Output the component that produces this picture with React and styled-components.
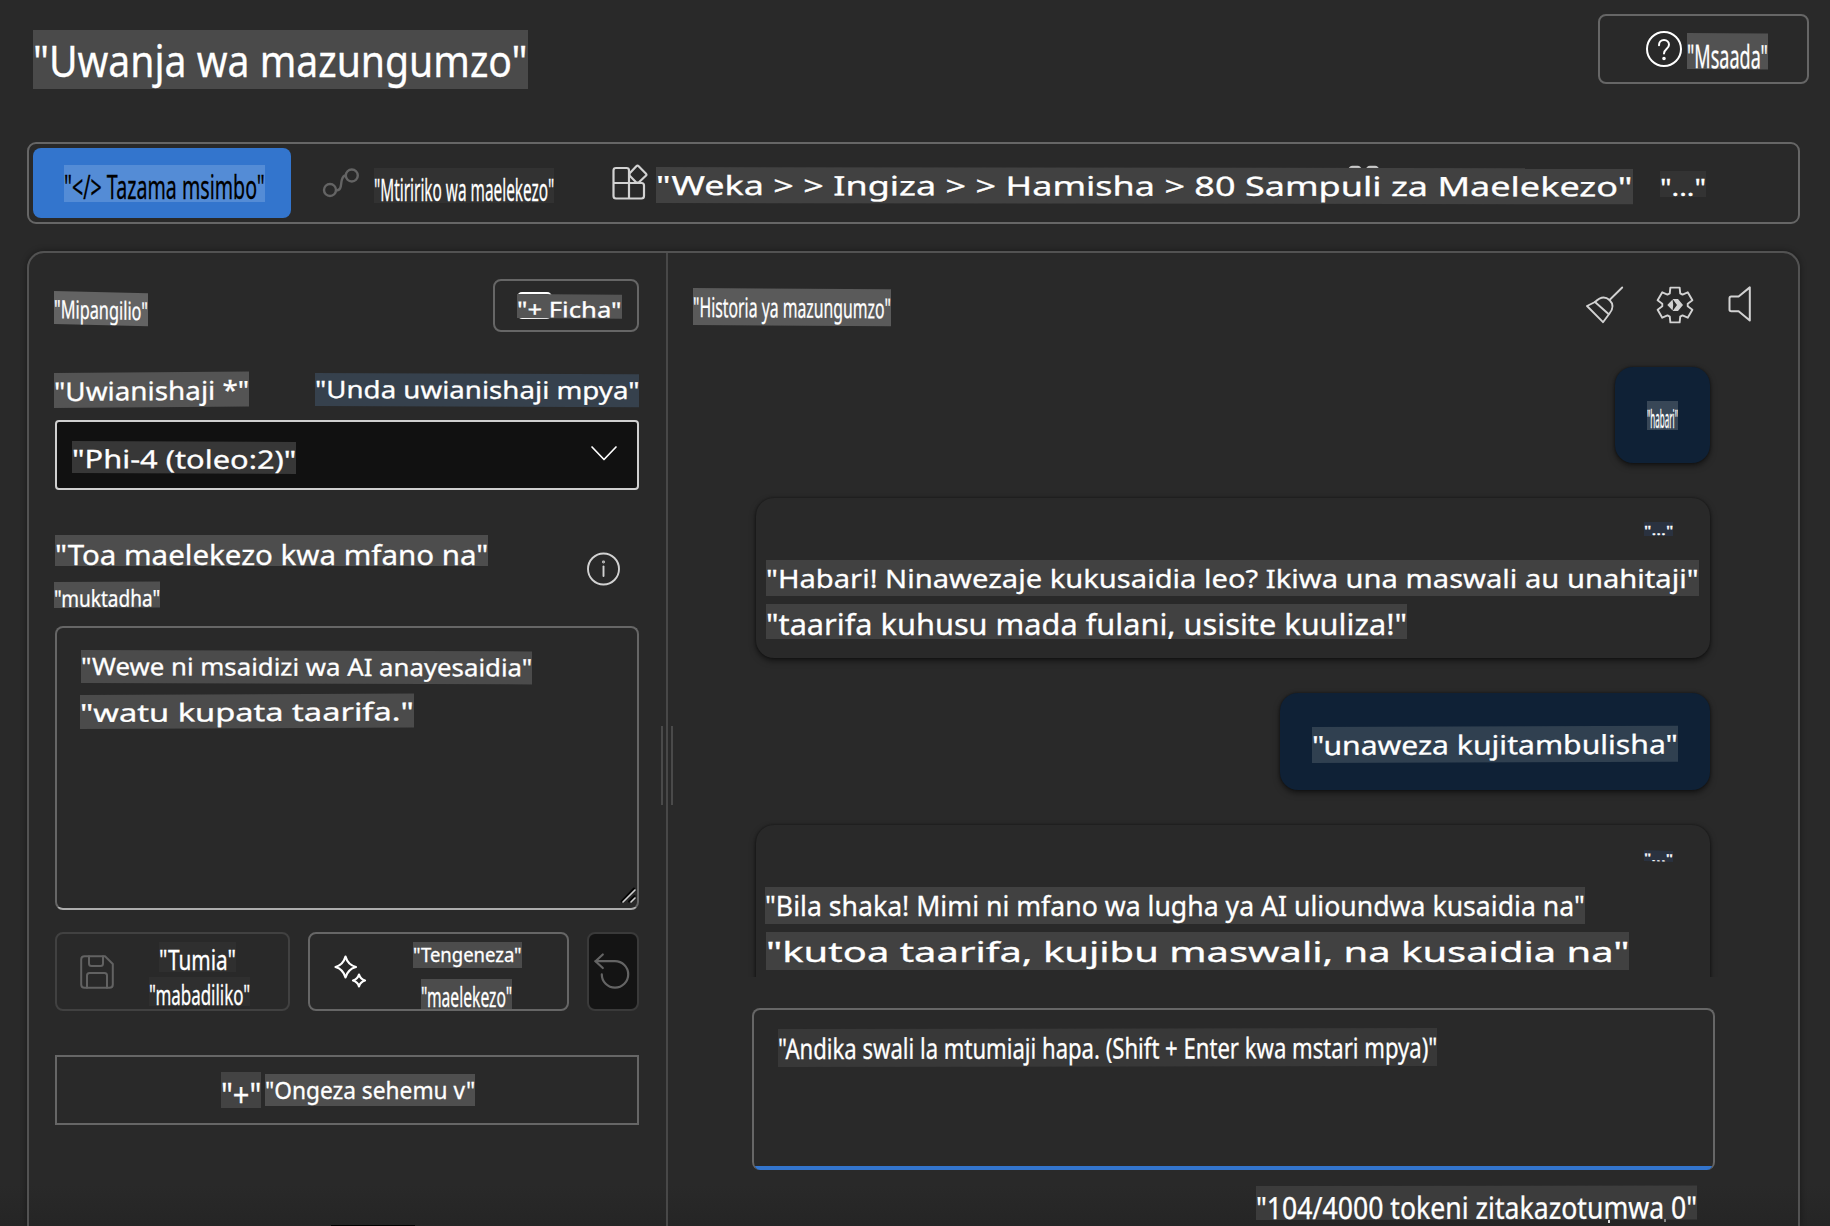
import React, { useLayoutEffect, useRef, useState } from "react";
import styled, { createGlobalStyle } from "styled-components";

const line = "#666666";
const faint = "#414141";
const glyph = "#d2d2d2";

const GlobalStyle = createGlobalStyle`
  *, *::before, *::after { box-sizing: border-box; }
  html, body { margin: 0; padding: 0; background: #292929; }
  body { font-family: "Noto Sans", "Open Sans", sans-serif; color: #fff; overflow: hidden; }
  button { font: inherit; color: inherit; margin: 0; padding: 0; background: none; text-align: left; }
  h1, h2, p { margin: 0; font-weight: 400; }
  svg { display: block; flex: none; fill: none; stroke-linecap: round; stroke-linejoin: round; overflow: visible; }
`;

/* ---------- highlighted label, its text condensed or widened to fill the box ---------- */

const LabelBox = styled.span`
  position: relative;
  display: block;
  flex: none;
  width: ${(p) => p.$w}px;
  height: ${(p) => p.$h}px;
  margin-top: ${(p) => p.$mt || 0}px;
  margin-left: ${(p) => p.$ml || 0}px;
  padding-top: ${(p) => p.$drop || 0}px;
  background: ${(p) => p.$bg};
  color: ${(p) => p.$color || "#fff"};
  font-size: ${(p) => p.$size}px;
  line-height: 1.362;
  -webkit-text-stroke: 0.3px currentColor;
  overflow: hidden;
  transform-origin: 0 0;
  transform: ${(p) => (p.$tilt ? `skewY(${Math.atan(p.$tilt / p.$w)}rad)` : "none")};
`;

const LabelText = styled.span`
  display: block;
  width: max-content;
  white-space: pre;
  transform-origin: 0 0;
`;

function Label({ children, w, h, size, bg, color, tilt, mt, ml, drop }) {
  const ref = useRef(null);
  const [scale, setScale] = useState(1);
  useLayoutEffect(() => {
    const fit = () => ref.current && setScale(w / ref.current.offsetWidth);
    fit();
    document.fonts?.ready.then(fit);
  }, [w, children]);
  return (
    <LabelBox $w={w} $h={h} $size={size} $bg={bg} $color={color} $tilt={tilt} $mt={mt} $ml={ml} $drop={drop}>
      <LabelText ref={ref} style={{ transform: `scaleX(${scale})` }}>{children}</LabelText>
    </LabelBox>
  );
}

/* ---------- page frame ---------- */

const Page = styled.div`
  width: 1830px;
  height: 1226px;
  display: flex;
  flex-direction: column;
  overflow: hidden;
  background: linear-gradient(#292929 0, #292929 1185px, #252525 1226px);
`;

const Header = styled.header`
  flex: none;
  height: 142px;
  padding: 14px 21px 0 33px;
  display: flex;
  justify-content: space-between;
  align-items: flex-start;
`;

const HelpButton = styled.button`
  display: flex;
  align-items: flex-start;
  width: 211px;
  height: 70px;
  padding: 15px 0 0 46px;
  border: 2px solid ${line};
  border-radius: 8px;
`;

const Toolbar = styled.nav`
  flex: none;
  display: flex;
  align-items: flex-start;
  height: 82px;
  margin: 0 30px 0 27px;
  padding: 4px;
  border: 2px solid ${line};
  border-radius: 9px;
`;

const CodeButton = styled.button`
  display: flex;
  align-items: flex-start;
  width: 258px;
  height: 70px;
  padding: 17px 0 0 31px;
  border: 0;
  border-radius: 8px;
  background: #3375cd;
`;

const ToolItem = styled.div`
  position: relative;
  display: flex;
  align-items: flex-start;
  margin-left: ${(p) => p.$gap}px;
  padding-top: ${(p) => p.$top}px;
`;

const BuriedIcon = styled.span`
  position: absolute;
  left: 736px;
  top: 17px;
`;

const Panel = styled.main`
  flex: 1;
  min-height: 0;
  display: flex;
  margin: 27px 30px 0 27px;
  border: 2px solid #525252;
  border-bottom: 0;
  border-radius: 17px 17px 0 0;
  box-shadow: 0 0 6px rgba(0, 0, 0, 0.4);
`;

/* ---------- settings column ---------- */

const Settings = styled.section`
  width: 637px;
  flex: none;
  display: flex;
  flex-direction: column;
  padding: 26px 27px 0 26px;
`;

const Row = styled.div`
  flex: none;
  display: flex;
  justify-content: space-between;
  align-items: flex-start;
  height: ${(p) => p.$h}px;
  margin-top: ${(p) => p.$mt || 0}px;
`;

const HideButton = styled.button`
  position: relative;
  display: flex;
  width: 146px;
  height: 53px;
  padding: 13px 0 0 22px;
  border: 2px solid ${line};
  border-radius: 8px;
`;

const HideIcon = styled.span`
  position: absolute;
  left: 22px;
  top: 11px;
  width: 35px;
  height: 27px;
  border: 2px solid #fff;
  border-radius: 5px;
`;

const Select = styled.div`
  flex: none;
  display: flex;
  justify-content: space-between;
  height: 70px;
  padding: 19px 20px 0 15px;
  border: 2px solid #d0d0d0;
  border-radius: 4px;
  background: #111;
`;

const ChevronWrap = styled.span`
  padding-top: 5px;
`;

const Guidance = styled.div`
  flex: none;
  height: 136px;
  display: flex;
  justify-content: space-between;
  padding: 45px 19px 0 0;
`;

const InfoWrap = styled.span`
  padding-top: 17px;
`;

const PromptArea = styled.div`
  position: relative;
  flex: none;
  height: 284px;
  padding: 22px 24px;
  border: 2px solid ${line};
  border-bottom-color: #adadad;
  border-radius: 8px;
`;

const Grip = styled.span`
  position: absolute;
  right: 1px;
  bottom: 5px;
`;

const Actions = styled.div`
  flex: none;
  display: flex;
  gap: 18px;
  margin-top: 22px;
`;

const Action = styled.button`
  display: flex;
  align-items: flex-start;
  width: ${(p) => p.$w}px;
  height: 79px;
  padding: 8px 0 0 ${(p) => p.$pl}px;
  border: 2px solid ${(p) => p.$line};
  border-radius: 8px;
  background: ${(p) => p.$bg || "transparent"};
`;

const ActionIcon = styled.span`
  width: 38px;
  flex: none;
  padding-top: ${(p) => p.$top}px;
`;

const Stack = styled.span`
  display: flex;
  flex-direction: column;
  align-items: flex-start;
  margin-left: ${(p) => p.$ml || 0}px;
`;

const AddSection = styled.button`
  flex: none;
  display: flex;
  align-items: flex-start;
  height: 70px;
  margin-top: 44px;
  padding: 15px 0 0 164px;
  border: 2px solid ${line};
`;

const Cutoff = styled.div`
  width: 84px;
  height: 1px;
  margin: auto 0 0 276px;
  background: #000;
`;

const Divider = styled.div`
  flex: none;
  position: relative;
  width: 2px;
  background: #484848;

  &::before {
    content: "";
    position: absolute;
    left: -5px;
    top: 473px;
    width: 12px;
    height: 79px;
    border: solid #4a4a4a;
    border-width: 0 2px;
  }
`;

/* ---------- chat column ---------- */

const Chat = styled.section`
  flex: 1;
  min-width: 0;
  display: flex;
  flex-direction: column;
`;

const ChatHeader = styled.div`
  flex: none;
  height: 100px;
  padding: 32px 45px 0 25px;
  display: flex;
  justify-content: space-between;
  align-items: flex-start;
`;

const ChatTools = styled.div`
  display: flex;
  align-items: flex-start;
`;

const ToolIcon = styled.span`
  margin-left: ${(p) => p.$gap || 0}px;
`;

const Messages = styled.div`
  flex: none;
  height: 624px;
  overflow: hidden;
  display: flex;
  flex-direction: column;
  gap: 35px;
  padding: 14px 88px 0;
`;

const Bubble = styled.article`
  flex: none;
  border-radius: 18px;
  box-shadow: 0 3px 6px rgba(0, 0, 0, 0.5), 0 0 3px rgba(0, 0, 0, 0.45);
`;

const UserBubble = styled(Bubble)`
  align-self: flex-end;
  width: ${(p) => p.$w}px;
  height: ${(p) => p.$h}px;
  padding: 34px 0 0 32px;
  background: #0f2136;
`;

const BotBubble = styled(Bubble)`
  height: ${(p) => p.$h}px;
  padding: ${(p) => p.$top}px 0 0 9px;
  background: #292929;
`;

const Composer = styled.div`
  flex: none;
  position: relative;
  height: 162px;
  margin: 31px 83px 0 84px;
  padding: 19px 24px;
  border: 2px solid ${line};
  border-bottom: 0;
  border-radius: 8px;
  overflow: hidden;

  &::after {
    content: "";
    position: absolute;
    left: -2px;
    right: -2px;
    bottom: 0;
    height: 4px;
    background: #3375cd;
  }
`;

const TokenCount = styled.div`
  position: relative;
  display: flex;
  justify-content: flex-end;
  padding: 16px 101px 0 0;

  &::after {
    content: "";
    position: absolute;
    right: 188px;
    bottom: -3px;
    width: 2px;
    height: 3px;
    background: #ddd;
    box-shadow: 56px -1px 0 #888;
  }
`;

/* ---------- icons ---------- */

const HelpIcon = () => (
  <svg width="36" height="36" viewBox="0 0 36 36" stroke="#fff" strokeWidth="2">
    <circle cx="18" cy="18" r="17" />
    <path d="M13 14.2c0-3 2-5.2 5-5.2s5 2.100 5 4.800c0 4.200-5 4.400-5 8.700" />
    <circle cx="18" cy="27.500" r="0.800" fill="#fff" />
  </svg>
);

const FlowIcon = () => (
  <svg width="36" height="30" viewBox="0 0 36 30" stroke="#646464" strokeWidth="2.4">
    <circle cx="7" cy="22" r="6" />
    <circle cx="28.800" cy="7.500" r="6" />
    <path d="M13 22.500c6 0 4.500-6 5.800-10.500 1-3.500 2.200-4.500 4-4.500" />
  </svg>
);

const TilesIcon = () => (
  <svg width="36" height="36" viewBox="0 0 36 36" stroke={glyph} strokeWidth="2.2">
    <path d="M17 19V6.500Q17 4 14.500 4H4Q1.500 4 1.500 6.500V32Q1.500 34.500 4 34.500H29.500Q32 34.500 32 32V21.500Q32 19 29.500 19H1.500M17 19V34.500" />
    <path d="M24.300 2.200Q25.500 1 26.700 2.200L33.800 9.400Q35 10.600 33.800 11.800L26.700 18.500H24.300L17.500 11.600V9.400Z" />
  </svg>
);

const BuriedTilesIcon = () => (
  <svg width="32" height="14" viewBox="0 0 32 14" stroke="#c8c8c8" strokeWidth="2.4">
    <rect x="1.500" y="2" width="11" height="11" rx="3" />
    <rect x="19" y="2" width="11" height="11" rx="3" />
  </svg>
);

const BroomIcon = () => (
  <svg width="40" height="40" viewBox="0 0 40 40" stroke={glyph} strokeWidth="1.9">
    <path d="M37.200 2.500L24.500 15" />
    <path d="M2 21L10 17Q18 9 24.500 15Q30.500 21 24.500 28.500L18 37.200Z" />
    <path d="M10 17L23.500 29" />
  </svg>
);

const gearOutline = Array.from({ length: 6 }, (_, i) => -90 + i * 60)
  .flatMap((a) => [[a - 24, 12.8], [a - 15, 18], [a + 15, 18], [a + 24, 12.8]])
  .map(([a, r]) => {
    const t = (a * Math.PI) / 180;
    return `${(20 + r * Math.cos(t)).toFixed(2)},${(20 + r * Math.sin(t)).toFixed(2)}`;
  })
  .join(" ");

const GearIcon = () => (
  <svg width="40" height="40" viewBox="0 0 40 40" stroke={glyph} strokeWidth="1.9">
    <polygon points={gearOutline} />
    <g fill={glyph} stroke="none">
      <path d="M12.300 20L17.600 14.500L18.200 20L17.600 25.500Z" />
      <path d="M17.600 14H23L28 20L23 26H17.600L22 20Z" />
    </g>
  </svg>
);

const SpeakerIcon = () => (
  <svg width="26" height="38" viewBox="0 0 26 38" stroke={glyph} strokeWidth="2">
    <path d="M22.800 2.400V35.600L11.600 26.200H4.200Q2.500 26.200 2.500 24.500V13.200Q2.500 11.500 4.200 11.500H11.600Z" />
  </svg>
);

const ChevronIcon = () => (
  <svg width="26" height="15" viewBox="0 0 26 15" stroke="#fff" strokeWidth="1.7">
    <path d="M1 1L13 13.500L25 1" />
  </svg>
);

const InfoIcon = () => (
  <svg width="33" height="34" viewBox="0 0 33 34" stroke={glyph} strokeWidth="1.9">
    <circle cx="16.500" cy="17" r="15.500" />
    <path d="M16.500 14.500V24" />
    <circle cx="16.500" cy="10" r="0.500" />
  </svg>
);

const SaveIcon = () => (
  <svg width="34" height="34" viewBox="0 0 34 34" stroke="#626262" strokeWidth="2">
    <path d="M4.500 1.200H25L32.800 9V29.500Q32.800 32.800 29.500 32.800H4.500Q1.200 32.800 1.200 29.500V4.500Q1.200 1.200 4.500 1.200Z" />
    <path d="M9 1.200V8.500Q9 11 11.500 11H20.500Q23 11 23 8.500V1.200" />
    <path d="M7 32.800V20.500Q7 18 9.500 18H24.500Q27 18 27 20.500V32.800" />
  </svg>
);

const SparkleIcon = () => (
  <svg width="34" height="34" viewBox="0 0 34 34" stroke="#fff" strokeWidth="2.200">
    <path d="M11.500 1.500Q13.800 9.800 22 12Q13.800 14.200 11.500 22.500Q9.200 14.200 1.500 12Q9.200 9.800 11.500 1.500Z" />
    <path d="M25 19.500Q26.300 24.200 31 25.500Q26.300 26.800 25 31.500Q23.700 26.800 19 25.500Q23.700 24.200 25 19.500Z" />
  </svg>
);

const UndoIcon = () => (
  <svg width="36" height="36" viewBox="0 0 36 36" stroke="#646464" strokeWidth="2.200">
    <path d="M8.800 1.500L1.500 8.200L8.800 15" />
    <path d="M1.500 8.200H21A13.200 13.200 0 1 1 7.800 21.400" />
  </svg>
);

const GripIcon = () => (
  <svg width="15" height="15" viewBox="0 0 15 15">
    <path d="M0.500 13.500L13 0.500M8 13.500L13.500 8" stroke="#050505" strokeWidth="2" />
    <path d="M2 14L14 2M10 14L14 10" stroke="#d0d0d0" strokeWidth="1.600" />
  </svg>
);

export default function App() {
  return (
    <>
      <GlobalStyle />
      <Page>
        <Header>
          <h1><Label w={495} h={59} size={43.5} bg="#4a4a4a" mt={16} drop={1}>"Uwanja wa mazungumzo"</Label></h1>
          <HelpButton>
            <HelpIcon />
            <Label w={81} h={36} size={32.5} bg="#525252" mt={2} ml={5} drop={0.5} tilt={0.6}>"Msaada"</Label>
          </HelpButton>
        </Header>

        <Toolbar>
          <CodeButton>
            <Label w={201} h={37} size={33} bg="#548cd6" color="#000">{'"</> Tazama msimbo"'}</Label>
          </CodeButton>
          <ToolItem $gap={32} $top={20}>
            <FlowIcon />
            <Label w={180} h={35} size={31} bg="#323232" ml={15}>"Mtiririko wa maelekezo"</Label>
          </ToolItem>
          <ToolItem $gap={58} $top={16}>
            <TilesIcon />
            <BuriedIcon><BuriedTilesIcon /></BuriedIcon>
            <Label w={977} h={36} size={26.5} bg="#414141" mt={3} ml={8} tilt={1.3}>
              {'"Weka > > Ingiza > > Hamisha > 80 Sampuli za Maelekezo"'}
            </Label>
          </ToolItem>
          <ToolItem $gap={27} $top={23}>
            <Label w={46} h={26} size={23.5} bg="#333333">"..."</Label>
          </ToolItem>
        </Toolbar>

        <Panel>
          <Settings>
            <Row $h={53}>
              <Label w={94} h={33} size={25} bg="#636363" mt={12} ml={-1} tilt={2.3}>"Mipangilio"</Label>
              <HideButton>
                <HideIcon />
                <Label w={105} h={24} size={21.5} bg="#555555" tilt={0.8}>"+ Ficha"</Label>
              </HideButton>
            </Row>
            <Row $h={48} $mt={40}>
              <Label w={195} h={35} size={25.7} bg="#545454" mt={1} ml={-1} drop={0.5} tilt={-1.6}>"Uwianishaji *"</Label>
              <Label w={324} h={33} size={24} bg="#36414d" mt={1} tilt={1.2}>"Unda uwianishaji mpya"</Label>
            </Row>
            <Select>
              <Label w={224} h={32} size={25.3} bg="#373737" tilt={1}>"Phi-4 (toleo:2)"</Label>
              <ChevronWrap><ChevronIcon /></ChevronWrap>
            </Select>
            <Guidance>
              <Stack>
                <Label w={433} h={31} size={28} bg="#4d4d4d">"Toa maelekezo kwa mfano na"</Label>
                <Label w={106} h={26} size={23} bg="#505050" mt={16} ml={-1} drop={0.5} tilt={-0.6}>"muktadha"</Label>
              </Stack>
              <InfoWrap><InfoIcon /></InfoWrap>
            </Guidance>
            <PromptArea>
              <Label w={451} h={33} size={24} bg="#4b4b4b" tilt={1.4}>"Wewe ni msaidizi wa AI anayesaidia"</Label>
              <Label w={334} h={34} size={24.8} bg="#4b4b4b" mt={12} ml={-1} drop={1} tilt={-1.6}>"watu kupata taarifa."</Label>
              <Grip><GripIcon /></Grip>
            </PromptArea>
            <Actions>
              <Action $w={235} $pl={23} $line={faint}>
                <ActionIcon $top={13}><SaveIcon /></ActionIcon>
                <Stack $ml={29}>
                  <Label w={77} h={30} size={27} bg="#2f2f2f" ml={12}>"Tumia"</Label>
                  <Label w={101} h={29} size={26.5} bg="#2f2f2f" mt={5} ml={2}>"mabadiliko"</Label>
                </Stack>
              </Action>
              <Action $w={261} $pl={24} $line={line}>
                <ActionIcon $top={13}><SparkleIcon /></ActionIcon>
                <Stack $ml={41}>
                  <Label w={109} h={26} size={19} bg="#4c4c4c" drop={1}>"Tengeneza"</Label>
                  <Label w={91} h={30} size={26.5} bg="#4c4c4c" mt={11} ml={8}>"maelekezo"</Label>
                </Stack>
              </Action>
              <Action $w={52} $pl={5} $line="#3a3a3a" $bg="#141414">
                <ActionIcon $top={11}><UndoIcon /></ActionIcon>
              </Action>
            </Actions>
            <AddSection>
              <Label w={40} h={36} size={32} bg="#434343" drop={1}>"+"</Label>
              <Label w={210} h={32} size={24} bg="#4f4f4f" mt={2} ml={4}>"Ongeza sehemu v"</Label>
            </AddSection>
            <Cutoff />
          </Settings>

          <Divider />

          <Chat>
            <ChatHeader>
              <h2><Label w={198} h={37} size={27.3} bg="#5a5a5a" mt={3} tilt={1.3}>"Historia ya mazungumzo"</Label></h2>
              <ChatTools>
                <ToolIcon><BroomIcon /></ToolIcon>
                <ToolIcon $gap={30}><GearIcon /></ToolIcon>
                <ToolIcon $gap={32}><SpeakerIcon /></ToolIcon>
              </ChatTools>
            </ChatHeader>
            <Messages>
              <UserBubble $w={95} $h={96}>
                <Label w={31} h={29} size={26} bg="#384757">"habari"</Label>
              </UserBubble>
              <BotBubble $h={160} $top={24}>
                <Label w={29} h={14} size={12.5} bg="#2a3240" ml={879}>"..."</Label>
                <Label w={933} h={36} size={26.3} bg="#414141" mt={24} ml={1} drop={1}>
                  "Habari! Ninawezaje kukusaidia leo? Ikiwa una maswali au unahitaji"
                </Label>
                <Label w={641} h={35} size={29} bg="#414141" mt={8} ml={1}>
                  "taarifa kuhusu mada fulani, usisite kuuliza!"
                </Label>
              </BotBubble>
              <UserBubble $w={430} $h={97}>
                <Label w={366} h={36} size={26.2} bg="#304050" drop={1} tilt={-1.3}>"unaweza kujitambulisha"</Label>
              </UserBubble>
              <BotBubble $h={200} $top={25}>
                <Label w={29} h={11} size={10.5} bg="#2a3240" ml={879} tilt={1}>"..."</Label>
                <Label w={820} h={37} size={27.2} bg="#414141" mt={26}>
                  "Bila shaka! Mimi ni mfano wa lugha ya AI ulioundwa kusaidia na"
                </Label>
                <Label w={863} h={38} size={28} bg="#414141" mt={8} ml={1}>
                  "kutoa taarifa, kujibu maswali, na kusaidia na"
                </Label>
              </BotBubble>
            </Messages>
            <Composer>
              <Label w={659} h={38} size={28.3} bg="#383838" tilt={-1}>
                "Andika swali la mtumiaji hapa. (Shift + Enter kwa mstari mpya)"
              </Label>
            </Composer>
            <TokenCount>
              <Label w={441} h={34} size={30.5} bg="#3c3c3c" drop={0.5} tilt={-0.5}>"104/4000 tokeni zitakazotumwa 0"</Label>
            </TokenCount>
          </Chat>
        </Panel>
      </Page>
    </>
  );
}
